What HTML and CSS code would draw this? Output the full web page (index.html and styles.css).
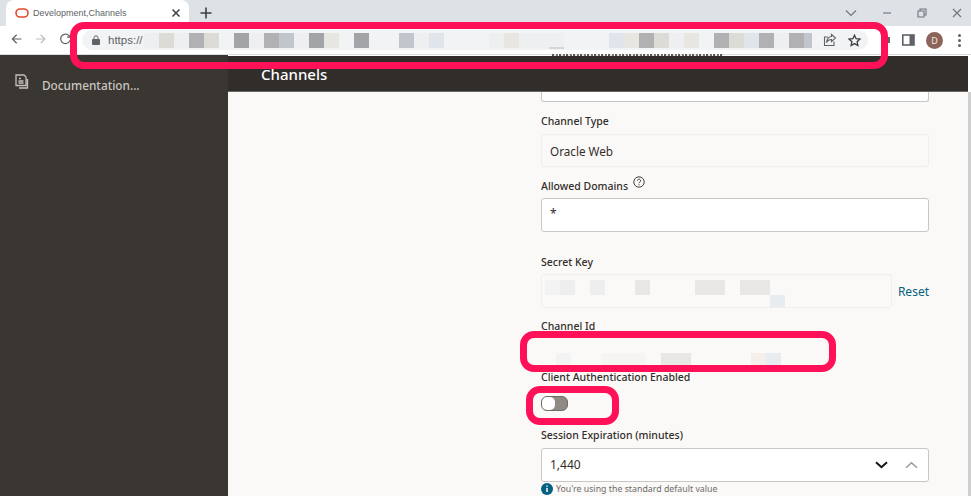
FILE: index.html
```html
<!DOCTYPE html>
<html lang="en">
<head>
    <meta charset="UTF-8">
    <title>Development,Channels</title>
    <link rel="stylesheet" href="styles.css">
</head>
<body>
    <div class="tabstrip">
        <div class="tab">
            <svg class="tab-logo" width="14" height="10" viewBox="0 0 14 10"><rect x="1" y="1" width="12" height="8" rx="4" fill="none" stroke="#e2492f" stroke-width="1.6"/></svg>
            <span class="tab-title">Development,Channels</span>
            <svg width="10" height="10" viewBox="0 0 10 10"><path d="M1.5 1.5l7 7M8.5 1.5l-7 7" stroke="#3c4043" stroke-width="1.5"/></svg>
        </div>
        <svg class="new-tab" width="12" height="12" viewBox="0 0 12 12"><path d="M6 0.5v11M0.5 6h11" stroke="#3c4043" stroke-width="1.6"/></svg>
        <div class="window-controls">
            <svg width="12" height="8" viewBox="0 0 12 8"><path d="M1 1.5l5 5 5-5" fill="none" stroke="#70757a" stroke-width="1.1"/></svg>
            <svg width="10" height="10" viewBox="0 0 10 10"><path d="M1 5h8" stroke="#70757a" stroke-width="1.1"/></svg>
            <svg width="10" height="10" viewBox="0 0 10 10"><path d="M1 3h6v6H1zM3 3V1h6v6H7" fill="none" stroke="#70757a" stroke-width="1.1"/></svg>
            <svg width="10" height="10" viewBox="0 0 10 10"><path d="M1 1l8 8M9 1l-8 8" stroke="#70757a" stroke-width="1.1"/></svg>
        </div>
    </div>

    <div class="toolbar">
        <div class="nav-buttons">
            <svg width="12" height="12" viewBox="0 0 12 12"><path d="M11 6H1.5M6 1.5L1.5 6 6 10.5" fill="none" stroke="#5f6368" stroke-width="1.3"/></svg>
            <svg width="12" height="12" viewBox="0 0 12 12"><path d="M1 6h9.500M6 1.500L10.500 6 6 10.500" fill="none" stroke="#bdc1c6" stroke-width="1.300"/></svg>
            <svg width="12" height="12" viewBox="0 0 12 12"><path d="M10.500 7.500A5 5 0 1 1 9.500 2.500L11 4M11 0.500V4H7.500" fill="none" stroke="#5f6368" stroke-width="1.300"/></svg>
        </div>
        <div class="url-bar">
            <svg class="lock" width="8" height="10" viewBox="0 0 8 10"><path d="M2 4V2.800a2 2 0 0 1 4 0V4" fill="none" stroke="#5f6368" stroke-width="1"/><rect y="4" width="8" height="6" rx="1" fill="#5f6368"/></svg>
            <span class="url-text">https://</span>
            <div class="pixels">
                <i class="l1"></i><i class="w1"></i><i class="l1"></i><i class="g2"></i><i class="w1"></i><i></i><i class="g1"></i><i class="l1"></i><i class="g2"></i><i class="g3"></i><i class="l1"></i><i class="g1"></i><i class="w2"></i><i></i><i class="g1"></i><i></i><i></i><i class="g3"></i><i class="l1"></i><i class="b1"></i><i></i><i></i><i></i><i class="l1"></i><i class="w2"></i><i class="l1"></i><i class="l1"></i><i class="l1"></i><i></i><i></i><i></i><i class="b1"></i><i class="w2"></i><i class="g2"></i><i class="w1"></i><i class="l1"></i><i class="w2"></i><i></i><i class="g2"></i><i class="w1"></i><i class="b1"></i><i class="g2"></i><i class="l1"></i><i class="g2"></i><i class="g3 stub"></i>
            </div>
            <svg class="url-icon" width="14" height="14" viewBox="0 0 14 14"><path d="M11 8.500V12.500H1.500V4H5M8.500 1.500L12.500 5 8.500 8.500V6.500C6 6.500 4.500 7.500 3.500 9.500 3.800 6.500 5.500 4 8.500 3.500z" fill="none" stroke="#5f6368" stroke-width="1.100"/></svg>
            <svg class="url-icon" width="13" height="13" viewBox="0 0 13 13"><path d="M6.500 1.200l1.600 3.500 3.800.4-2.800 2.600.8 3.800-3.400-1.900-3.400 1.900.8-3.800L1.100 5.100l3.800-.4z" fill="none" stroke="#3c4043" stroke-width="1.300"/></svg>
        </div>
        <div class="toolbar-end">
            <svg class="puzzle" width="8" height="10" viewBox="0 0 8 10"><path d="M0 2h3V0h2v2h3v6H0z" fill="#5f6368"/></svg>
            <svg width="14" height="12" viewBox="0 0 14 12"><rect x="1.800" y="1" width="11.200" height="10" fill="none" stroke="#5f6368" stroke-width="1.600"/><rect x="8.500" y="1" width="4.500" height="10" fill="#5f6368"/></svg>
            <span class="avatar">D</span>
            <span class="kebab"><i></i><i></i><i></i></span>
        </div>
    </div>

    <div class="app">
        <aside class="sidebar">
            <div class="side-item">
                <svg width="15" height="16" viewBox="0 0 15 16"><path d="M1 1h8l2 2v8.500H1zM4 4.500h2M3.500 7h5M3.500 9h5M12.500 5v9H4" fill="none" stroke="#c4c0bb" stroke-width="1.300"/></svg>
                <span>Documentation...</span>
            </div>
        </aside>
        <main class="main">
            <div class="main-inner">
                <header class="page-header"><h1>Channels</h1></header>
                <div class="form">
                    <div class="input input-cut"></div>

                    <label class="label">Channel Type</label>
                    <div class="input input-readonly input-type">Oracle Web</div>

                    <label class="label label-domains">Allowed Domains
                        <svg class="help" width="12" height="12" viewBox="0 0 12 12"><circle cx="6" cy="6" r="5.200" fill="none" stroke="#312d2a" stroke-width="0.900"/><path d="M4.400 4.700a1.600 1.600 0 1 1 2.400 1.400c-.6.300-.8.600-.8 1.100" fill="none" stroke="#312d2a" stroke-width="0.900"/><circle cx="6" cy="8.800" r="0.600" fill="#312d2a"/></svg>
                    </label>
                    <div class="input input-text">*</div>

                    <label class="label label-secret">Secret Key</label>
                    <div class="secret-row">
                        <div class="input input-readonly input-secret">
                            <div class="pixels pixels-secret">
                                <i class="s1"></i><i class="s2"></i><i></i><i class="s2"></i><i></i><i></i><i class="s3"></i><i></i><i></i><i></i><i class="s3"></i><i class="s3"></i><i></i><i class="s3"></i><i class="s3"></i><i class="s4 drop"></i>
                            </div>
                        </div>
                        <a class="reset">Reset</a>
                    </div>

                    <label class="label label-channel">Channel Id</label>
                    <div class="channel-id">
                        <div class="pixels pixels-channel">
                            <i></i><i class="s1"></i><i></i><i></i><i class="s5"></i><i class="s5"></i><i class="s5"></i><i></i><i class="s3"></i><i class="s3"></i><i></i><i></i><i></i><i></i><i class="s6"></i><i class="s4"></i>
                        </div>
                    </div>

                    <label class="label">Client Authentication Enabled</label>
                    <div class="toggle-row"><span class="toggle"><i></i></span></div>

                    <label class="label label-session">Session Expiration (minutes)</label>
                    <div class="input input-number">
                        <span>1,440</span>
                        <svg width="13" height="8" viewBox="0 0 13 8"><path d="M1 1.200l5.500 5 5.500-5" fill="none" stroke="#161513" stroke-width="2"/></svg>
                        <svg width="13" height="8" viewBox="0 0 13 8"><path d="M1 6.800l5.500-5 5.500 5" fill="none" stroke="#9a9a98" stroke-width="1.500"/></svg>
                    </div>
                    <div class="hint">
                        <svg width="12" height="12" viewBox="0 0 12 12"><circle cx="6" cy="6" r="6" fill="#04617f"/><path d="M6 5v4M6 2.600v1.200" stroke="#fff" stroke-width="1.500"/></svg>
                        <span>You're using the standard default value</span>
                    </div>
                </div>
            </div>
            <div class="scrollbar"></div>
        </main>
    </div>

    <!-- bit of the page showing through the toolbar -->
    <div class="ghost-line"></div>
    <div class="ghost-text"></div>

    <!-- annotations drawn on top of the screenshot -->
    <div class="mark mark-url"></div>
    <div class="mark mark-channel"></div>
    <div class="mark mark-toggle"></div>
</body>
</html>
```

FILE: styles.css
```css
html, body {
    margin: 0;
    height: 496px;
    overflow: hidden;
}
body {
    position: relative;
    font-family: "Noto Sans", "Open Sans", sans-serif;
    color: #312d2a;
    background: #fbf9f8;
}

/* browser chrome */
.tabstrip {
    height: 26px;
    background: #dee1e6;
    display: flex;
    align-items: center;
    padding-left: 6px;
}
.tab {
    width: 183px;
    height: 26px;
    box-sizing: border-box;
    padding: 0 8px 0 9px;
    background: #fff;
    border-radius: 8px 8px 0 0;
    display: flex;
    align-items: center;
}
.tab-logo {
    margin-right: 4px;
}
.tab-title {
    flex-grow: 1;
    font-family: "Liberation Sans", sans-serif;
    font-size: 9px;
    color: #5f6368;
    white-space: nowrap;
}
.new-tab {
    margin-left: 11px;
}
.window-controls {
    margin-left: auto;
    width: 117px;
    padding-right: 9px;
    display: flex;
    justify-content: space-between;
    align-items: center;
}
.toolbar {
    height: 28px;
    box-sizing: border-box;
    background: #fff;
    display: flex;
    align-items: flex-start;
    padding-top: 4px;
}
.nav-buttons {
    width: 82px;
    box-sizing: border-box;
    padding: 3px 11px;
    display: flex;
    gap: 13px;
}
.url-bar {
    width: 786px;
    height: 20px;
    box-sizing: border-box;
    padding-left: 10px;
    background: #f1f3f4;
    border-radius: 10px;
    display: flex;
    align-items: center;
    overflow: hidden;
}
.lock {
    flex-shrink: 0;
}
.url-text {
    width: 36px;
    margin-left: 8px;
    flex-shrink: 0;
    white-space: nowrap;
    font-family: "Liberation Sans", sans-serif;
    font-size: 11.500px;
    color: #5f6368;
}
.url-icon {
    flex-shrink: 0;
    margin-left: 11px;
}
.toolbar-end {
    flex-grow: 1;
    display: flex;
    align-items: center;
    gap: 11px;
    padding-left: 13px;
    height: 20px;
}
.puzzle {
    margin-left: 1px;
}
.avatar {
    width: 17px;
    height: 17px;
    border-radius: 50%;
    background: #8d6558;
    color: #f3e9e4;
    font-size: 9px;
    text-align: center;
    line-height: 17px;
    flex-shrink: 0;
}
.kebab {
    display: flex;
    flex-direction: column;
    gap: 2px;
    margin-left: 4px;
}
.kebab i {
    width: 3px;
    height: 3px;
    border-radius: 50%;
    background: #5f6368;
}
.ghost-line {
    position: absolute;
    left: 549px;
    top: 47px;
    width: 15px;
    height: 2px;
    background: #d5d5d5;
}
.ghost-text {
    position: absolute;
    left: 552px;
    top: 54px;
    width: 171px;
    height: 2px;
    background: repeating-linear-gradient(90deg, #5a5754 0 2px, #e4e2e0 2px 4px, #77736f 4px 6px, #fff 6px 7px);
}

/* pixelated parts of the capture */
.pixels {
    display: flex;
    flex-shrink: 0;
}
.pixels i {
    width: 15px;
    height: 15px;
    flex-shrink: 0;
}
.pixels i.stub { width: 8px; }
.g1 { background: #a3a4a7; }
.g2 { background: #b1b1b3; }
.g3 { background: #c1c6cd; }
.w1 { background: #dddbd6; }
.w2 { background: #e8e6e1; }
.b1 { background: #dfe5ea; }
.l1 { background: #edeff1; }
.s1 { background: #f3f3f3; }
.s2 { background: #eeeeee; }
.s3 { background: #e8e7e6; }
.s4 { background: #e6ecef; }
.s5 { background: #f7f5f3; }
.s6 { background: #f5efec; }
.pixels i.drop {
    margin-top: 15px;
}

/* page */
.app {
    height: 442px;
    display: flex;
    border-top: 1px solid #dadce0;
    box-sizing: border-box;
}
.sidebar {
    width: 228px;
    flex-shrink: 0;
    background: #3a3632;
    box-sizing: border-box;
    padding: 22px 0 0 15px;
}
.side-item {
    display: flex;
    align-items: center;
    gap: 12px;
    color: #c9c5c0;
    font-size: 11.800px;
    font-weight: 500;
}
.side-item svg {
    margin-top: -6px;
}
.main {
    flex-grow: 1;
    display: flex;
    min-width: 0;
}
.main-inner {
    flex-grow: 1;
    min-width: 0;
}
.scrollbar {
    width: 3px;
    background: linear-gradient(#fff 37px, #cfcfcf 37px);
}
.page-header {
    height: 37px;
    box-sizing: border-box;
    background: #312d2a;
    border-top: 1px solid #fff;
    border-bottom: 1px solid #6a6662;
    padding-left: 33px;
}
.page-header h1 {
    margin: 0;
    font-size: 15px;
    line-height: 37px;
    font-weight: 500;
    color: #fff;
}
.form {
    width: 388px;
    margin-left: 313px;
}
.label {
    display: block;
    height: 16px;
    font-size: 10.500px;
    line-height: 16px;
    font-weight: 500;
    white-space: nowrap;
}
.input {
    height: 34px;
    box-sizing: border-box;
    border: 1px solid #c9c7c5;
    border-radius: 3px;
    background: #fff;
    font-size: 12px;
    line-height: 32px;
    padding: 0 8px;
    margin-top: 4px;
}
.input-cut {
    height: 10px;
    margin: 0 0 11px;
    border-top: none;
    border-radius: 0 0 3px 3px;
}
.input-readonly {
    background: #fbf9f8;
    border-color: #f1efed;
}
.input-type {
    height: 33px;
    margin-top: 5px;
    font-size: 11.700px;
}
.input-text {
    line-height: 30px;
}
.label-domains {
    margin-top: 11px;
    display: flex;
    align-items: center;
    gap: 5px;
}
.help {
    margin-top: -8px;
}
.label-secret {
    margin-top: 22px;
}
.secret-row {
    display: flex;
    align-items: center;
    justify-content: space-between;
    margin-top: 4px;
}
.input-secret {
    width: 351px;
    margin-top: 0;
    padding: 0 3px;
    overflow: hidden;
}
.pixels-secret {
    height: 30px;
    padding-top: 5px;
}
.reset {
    color: #04617f;
    font-size: 12px;
}
.label-channel {
    margin-top: 10px;
}
.channel-id {
    height: 35px;
    box-sizing: border-box;
    padding-top: 19px;
}
.pixels-channel i {
    height: 12px;
}
.toggle-row {
    height: 42px;
    box-sizing: border-box;
    padding-top: 11px;
}
.toggle {
    display: block;
    width: 27px;
    height: 15px;
    box-sizing: border-box;
    border: 1px solid #6f6b66;
    border-radius: 6px;
    background: #8f8a82;
}
.toggle i {
    display: block;
    width: 13px;
    height: 13px;
    border-radius: 5px;
    background: #fff;
}
.input-number {
    height: 34px;
    margin-top: 5px;
    display: flex;
    align-items: center;
    gap: 17px;
    padding-right: 10px;
}
.input-number span {
    flex-grow: 1;
}
.hint {
    display: flex;
    align-items: center;
    gap: 3px;
    font-size: 8.800px;
    line-height: 14px;
    color: #6f6b66;
}

/* pink highlight boxes */
.mark {
    position: absolute;
    box-sizing: border-box;
    border: 7px solid #ff1158;
    border-radius: 14px;
}
.mark-url {
    left: 70px;
    top: 22px;
    width: 818px;
    height: 47px;
}
.mark-channel {
    left: 520px;
    top: 331px;
    width: 316px;
    height: 41px;
}
.mark-toggle {
    left: 526px;
    top: 386px;
    width: 93px;
    height: 39px;
}
```
